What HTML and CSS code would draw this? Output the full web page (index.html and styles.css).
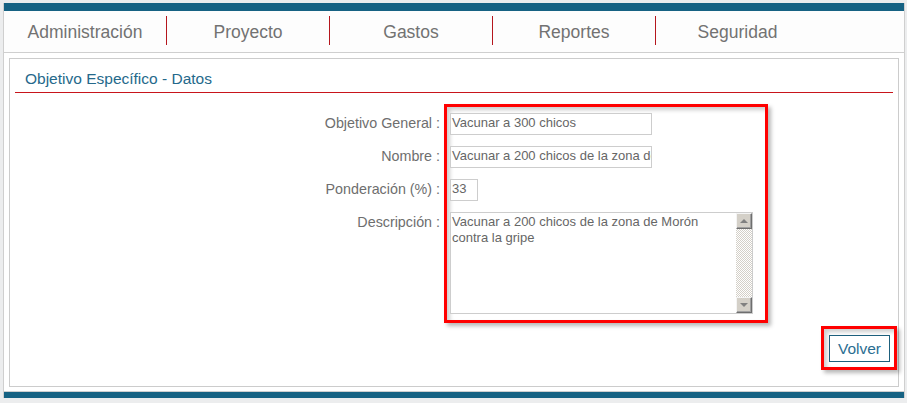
FILE: index.html
```html
<!DOCTYPE html>
<html lang="es">
<head>
<meta charset="utf-8">
<title>Objetivo Específico - Datos</title>
<link rel="stylesheet" href="styles.css">
</head>
<body>
<div class="shell">
  <div class="topbar"></div>
  <nav class="nav">
    <div class="nav-item sep">Administración</div>
    <div class="nav-item sep">Proyecto</div>
    <div class="nav-item sep">Gastos</div>
    <div class="nav-item sep">Reportes</div>
    <div class="nav-item">Seguridad</div>
  </nav>
  <div class="content">
    <div class="panel">
      <div class="panel-title">Objetivo Específico - Datos</div>
      <div class="form">
        <div class="labels">
          <div class="label">Objetivo General :</div>
          <div class="label">Nombre :</div>
          <div class="label">Ponderación (%) :</div>
          <div class="label">Descripción :</div>
        </div>
        <div class="fields mark">
          <div class="field wide">Vacunar a 300 chicos</div>
          <div class="field wide">Vacunar a 200 chicos de la zona de Morón contra la gripe</div>
          <div class="field small">33</div>
          <div class="area">
            <div class="area-text">Vacunar a 200 chicos de la zona de Morón contra la gripe</div>
            <div class="scroll">
              <div class="sbtn"><span class="tri up"></span></div>
              <div class="track"></div>
              <div class="sbtn"><span class="tri down"></span></div>
            </div>
          </div>
        </div>
      </div>
      <div class="actions">
        <div class="mark btn-mark">
          <div class="btn">Volver</div>
        </div>
      </div>
    </div>
  </div>
  <div class="bottombar"></div>
</div>
</body>
</html>
```

FILE: styles.css
```css
* { box-sizing: border-box; }
html, body { margin: 0; padding: 0; }
body {
  background: #ecedee;
  font-family: "Liberation Sans", Arial, sans-serif;
  padding-top: 3px;
}
.shell {
  width: 902px;
  margin-left: 3px;
  background: #fff;
  border-left: 1px solid #cfcfcf;
  border-right: 1px solid #cfcfcf;
}
.topbar { height: 8px; background: #166283; }
.bottombar { height: 6px; background: #166283; }
.nav {
  display: flex;
  height: 42px;
  padding-top: 5px;
  border-bottom: 1px solid #cfcfcf;
  background: #fdfdfd;
}
.nav-item {
  width: 163px;
  height: 29px;
  line-height: 32px;
  text-align: center;
  font-size: 17.5px;
  color: #727272;
}
.nav-item.sep { border-right: 1px solid #b5161d; }
.content {
  padding: 5px 5px 4px 5px;
  border-bottom: 1px solid #cfcfcf;
}
.panel {
  border: 1px solid #cccccc;
  padding: 0 1px 16px 5px;
}
.panel-title {
  height: 34px;
  margin-right: 4px;
  padding: 11px 0 0 10px;
  font-size: 15.5px;
  line-height: 18px;
  color: #25698b;
  border-bottom: 1px solid #c8151b;
}
.form {
  display: flex;
  align-items: flex-start;
  margin-top: 11px;
  padding-left: 225px;
}
.labels {
  width: 200px;
  padding-top: 9px;
  margin-right: 4px;
  display: flex;
  flex-direction: column;
  gap: 11px;
}
.label {
  height: 22px;
  line-height: 21px;
  text-align: right;
  font-size: 14.3px;
  color: #6e6e6e;
}
.mark {
  border: 3px solid #ff0000;
  box-shadow: 3px 3px 4px rgba(0,0,0,0.28), inset 3px 3px 4px rgba(0,0,0,0.2);
}
.fields {
  width: 324px;
  height: 219px;
  padding: 6px 0 0 3px;
  display: flex;
  flex-direction: column;
  gap: 11px;
}
.field {
  height: 22px;
  border: 1px solid #cdcdcd;
  padding: 0 2px 0 1px;
  font-size: 13px;
  line-height: 18px;
  color: #666;
  white-space: nowrap;
  overflow: hidden;
  background: #fff;
}
.field.wide { width: 202px; }
.field.small { width: 28px; }
.area {
  width: 303px;
  height: 102px;
  border: 1px solid #cdcdcd;
  display: flex;
  background: #fff;
}
.area-text {
  flex: 1;
  padding: 1px 2px 0 1px;
  font-size: 13px;
  line-height: 16px;
  color: #666;
}
.scroll {
  width: 16px;
  display: flex;
  flex-direction: column;
}
.sbtn {
  height: 16px;
  background: #d4d0c8;
  border-top: 1px solid #f4f4f4;
  border-left: 1px solid #f4f4f4;
  border-right: 1px solid #6e6e6e;
  border-bottom: 1px solid #6e6e6e;
  box-shadow: inset -1px -1px 0 #a0a0a0;
  display: flex;
  align-items: center;
  justify-content: center;
}
.tri { width: 0; height: 0; border-left: 4px solid transparent; border-right: 4px solid transparent; }
.tri.up { border-bottom: 4px solid #808080; }
.tri.down { border-top: 4px solid #808080; }
.track {
  flex: 1;
  background: repeating-conic-gradient(#d4d0c8 0 25%, #ffffff 0 50%) 0 0 / 2px 2px;
}
.actions {
  display: flex;
  justify-content: flex-end;
  margin-top: 3px;
}
.btn-mark {
  width: 76px;
  height: 44px;
  padding: 6px 0 0 5px;
}
.btn {
  width: 61px;
  height: 27px;
  border: 1px solid #1d5f7c;
  text-align: center;
  font-size: 15.5px;
  line-height: 25px;
  color: #2a6d91;
  background: #fff;
}
```
